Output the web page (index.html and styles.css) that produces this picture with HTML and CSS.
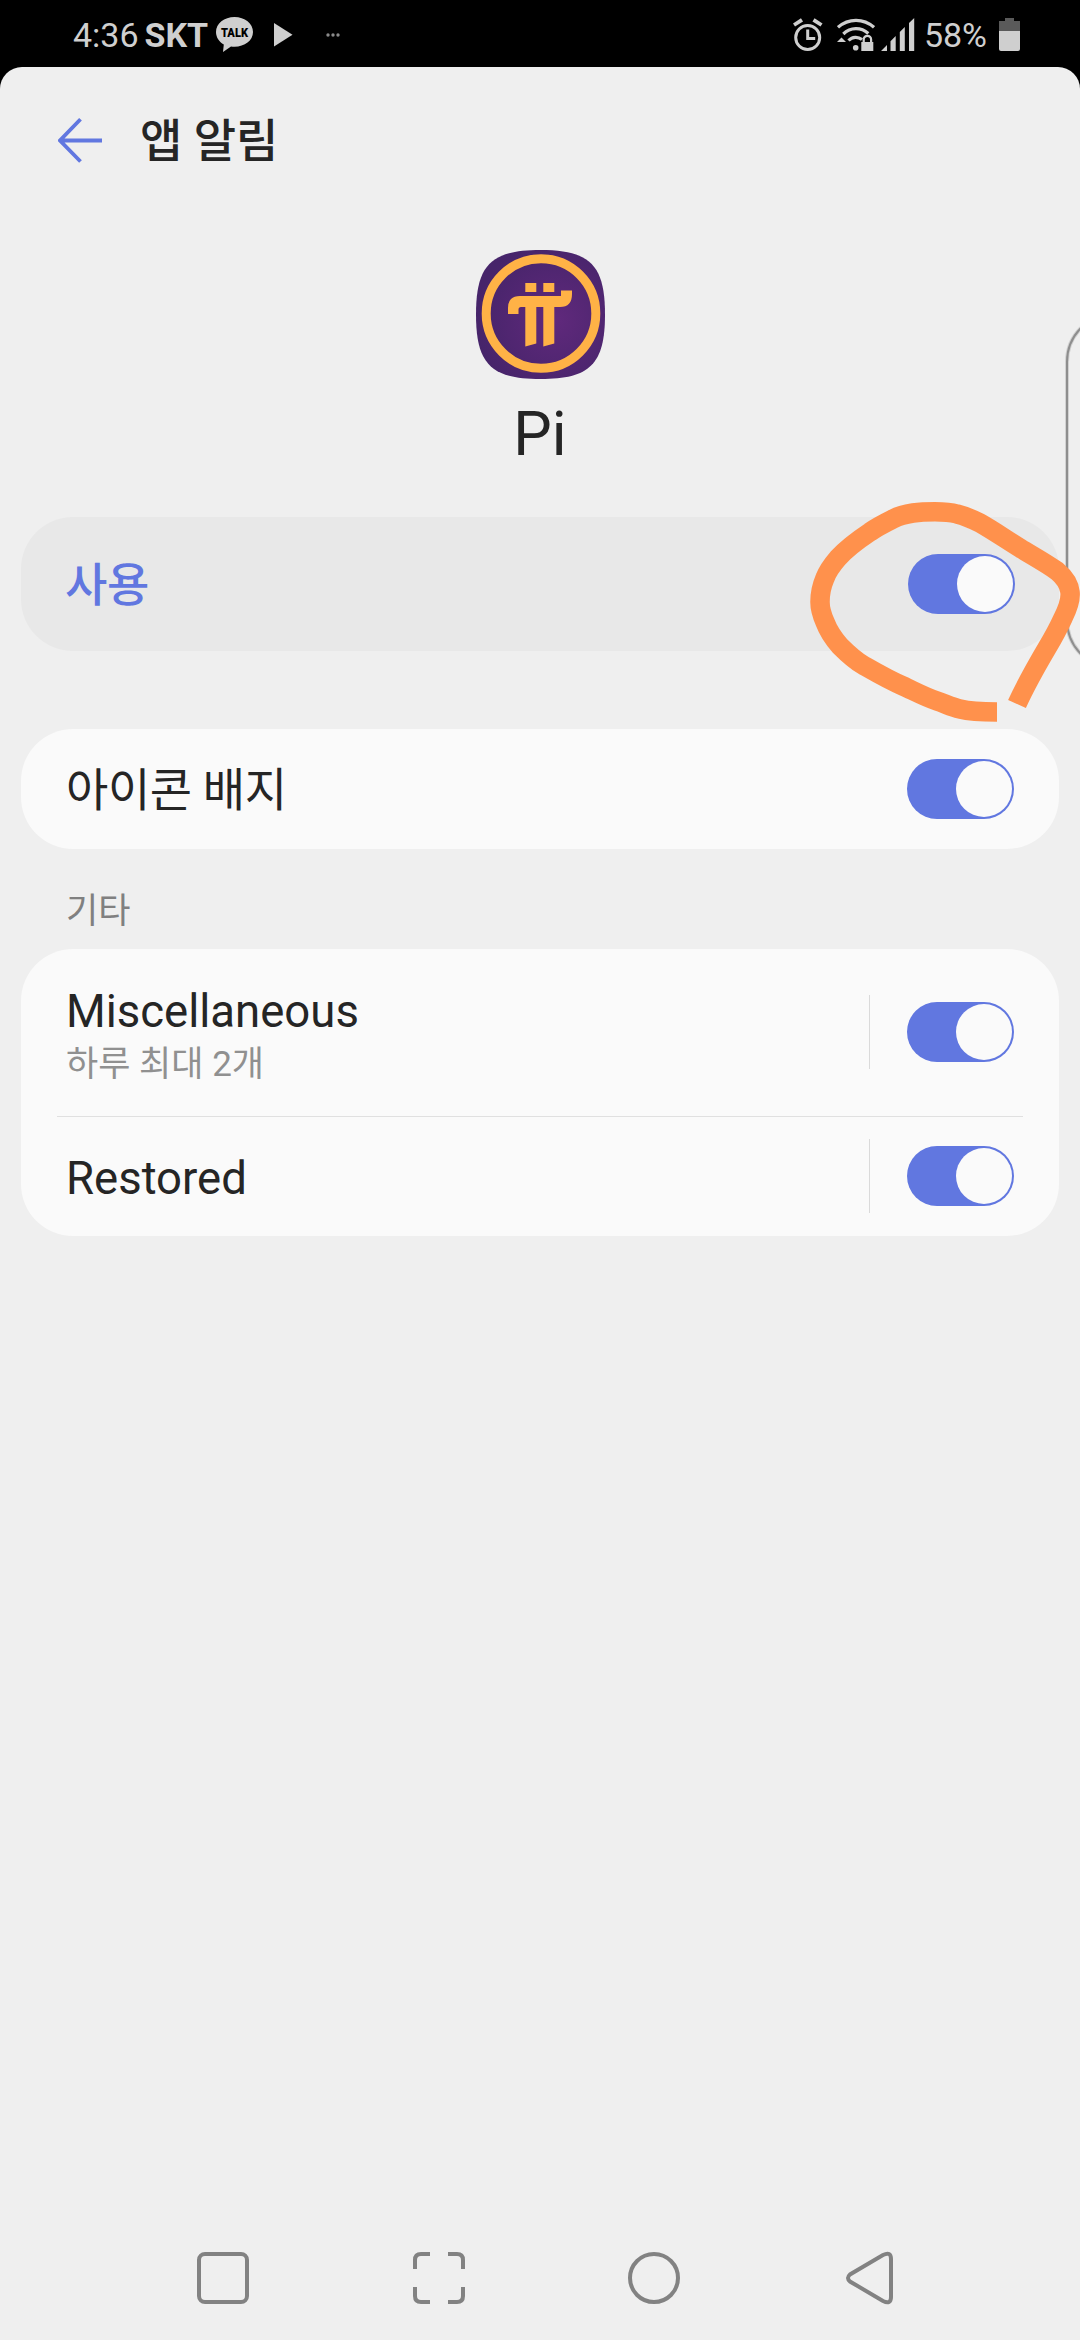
FILE: index.html
```
<!DOCTYPE html>
<html lang="ko">
<head>
    <meta charset="UTF-8">
    <meta name="viewport" content="width=device-width, initial-scale=1.0">
    <title>앱 알림</title>
    <link rel="stylesheet" href="styles.css">
</head>
<body>
    <!-- Status bar -->
    <div class="status-bar">
        <span class="time">4:36</span>
        <span class="carrier">SKT</span>
        <svg class="talk-icon" width="38" height="36" viewBox="0 0 38 36">
            <path d="M18.500 0C8.300 0 0 6.400 0 15c0 5.400 3.200 9.900 7.800 12.500L7 35l8-5.600c1.200.200 2.300.300 3.500.300C28.700 29.700 37 23.500 37 15S28.700 0 18.500 0z" fill="#cfcfcf"/>
            <text x="18.500" y="20" text-anchor="middle" class="talk-text" textLength="27" lengthAdjust="spacingAndGlyphs">TALK</text>
        </svg>
        <svg class="play-icon" width="19" height="24" viewBox="0 0 19 24">
            <path d="M0 0L18.500 11.700L0 23.500z" fill="#cfcfcf"/>
        </svg>
        <svg class="more-icon" width="14" height="4" viewBox="0 0 14 4">
            <g fill="#8a8a8a"><circle cx="2" cy="2" r="1.700"/><circle cx="7" cy="2" r="1.700"/><circle cx="12" cy="2" r="1.700"/></g>
        </svg>
        <div class="status-right">
            <svg class="alarm-icon" width="30" height="34" viewBox="0 0 30 34" fill="none" stroke="#cfcfcf">
                <circle cx="14.700" cy="19.500" r="12" stroke-width="3"/>
                <path d="M14.700 11.500v9h7.500" stroke-width="3"/>
                <path d="M1 7L9 1.800M20.500 1.800L28.500 7" stroke-width="3.800"/>
            </svg>
            <svg class="wifi-icon" width="38" height="34" viewBox="0 0 38 34" fill="none" stroke="#cfcfcf">
                <path d="M1 9.300C11.500 0 26.500 0 37 9.300" stroke-width="3.200"/>
                <path d="M6.300 16C13.500 9 24 9 31.300 15.500" stroke-width="3.200"/>
                <path d="M11.500 22.500C15.500 18.400 21 18.400 25 21.500" stroke-width="3.200"/>
                <circle cx="18.700" cy="29.700" r="2.800" fill="#cfcfcf" stroke="none"/>
                <path d="M0 24L4.500 19.500L9 24z" fill="#cfcfcf" stroke="none"/>
                <path d="M26.700 25v-3.500a3.700 3.700 0 0 1 7.400 0V25" stroke-width="2.200"/>
                <rect x="24.300" y="24" width="12" height="9" fill="#cfcfcf" stroke="none"/>
            </svg>
            <svg class="signal-icon" width="34" height="34" viewBox="0 0 34 34" fill="#cfcfcf">
                <path d="M0 33L6 27V33zM9.500 23.300L14.700 18V33H9.500zM18.800 14L23.800 9V33H18.800zM28 5L33.200 0V33H28z"/>
            </svg>
            <span class="percent">58%</span>
            <svg class="battery-icon" width="21" height="34" viewBox="0 0 21 34">
                <path d="M0 3h6V0h9v3h6v10H0z" fill="#5a5a5a"/>
                <path d="M0 13h21v18q0 2-2 2H2q-2 0-2-2z" fill="#cfcfcf"/>
            </svg>
        </div>
    </div>

    <div class="screen">
        <header class="app-header">
            <svg class="back-icon" width="44" height="46" viewBox="0 0 44 46" fill="none" stroke="#6177e0" stroke-width="3.800">
                <path d="M22.500 1.300L2 22.500L22.500 43.500M2 22.500H44"/>
            </svg>
            <h1>앱 알림</h1>
        </header>

        <div class="app-info">
            <svg width="129" height="129" viewBox="0 0 129 129">
                <defs>
                    <radialGradient id="piBg" cx="62%" cy="54%" r="62%">
                        <stop offset="0" stop-color="#60297c"/>
                        <stop offset="1" stop-color="#46246a"/>
                    </radialGradient>
                </defs>
                <path d="M64.500 0C114 0 129 15 129 64.500S114 129 64.500 129S0 114 0 64.500S15 0 64.500 0z" fill="url(#piBg)"/>
                <circle cx="65" cy="63.500" r="54.800" fill="none" stroke="#ffb246" stroke-width="9"/>
                <g fill="#ffb246">
                    <rect x="49.300" y="33" width="11" height="9"/>
                    <rect x="67.300" y="33" width="11" height="9"/>
                    <path d="M32 64V58Q32 46 44 46H85V40.500H96V44Q96 57 84 57H78.300V93.500L67.300 96.500V57H60.300V93.500L49.300 96.500V57H45Q42.500 57 42.500 59.500V64z"/>
                </g>
            </svg>
            <div class="app-name">Pi</div>
        </div>

        <div class="card card-main">
            <span class="label label-main">사용</span>
            <span class="toggle"></span>
        </div>

        <div class="card card-badge">
            <span class="label">아이콘 배지</span>
            <span class="toggle"></span>
        </div>

        <div class="section-title">기타</div>

        <div class="card-list">
            <div class="row row-tall">
                <div class="row-text">
                    <div class="label-en">Miscellaneous</div>
                    <div class="sub">하루 최대 2개</div>
                </div>
                <span class="separator"></span>
                <span class="toggle"></span>
            </div>
            <div class="line"></div>
            <div class="row">
                <div class="row-text">
                    <div class="label-en">Restored</div>
                </div>
                <span class="separator"></span>
                <span class="toggle"></span>
            </div>
        </div>
    </div>

    <!-- Navigation bar -->
    <nav class="nav-bar">
        <svg width="54" height="54" viewBox="0 0 54 54">
            <rect x="3" y="3" width="48" height="48" rx="6"/>
        </svg>
        <svg width="54" height="54" viewBox="0 0 54 54">
            <path d="M18 3H9Q3 3 3 9V18M36 3H45Q51 3 51 9V18M18 51H9Q3 51 3 45V36M36 51H45Q51 51 51 45V36"/>
        </svg>
        <svg width="54" height="54" viewBox="0 0 54 54">
            <circle cx="27" cy="27" r="24"/>
        </svg>
        <svg width="54" height="54" viewBox="0 0 54 54">
            <path d="M40 4Q48 0 48 8V46Q48 54 40 50L7 30.500Q3 27 7 23.500z"/>
        </svg>
    </nav>

    <!-- Edge panel handle -->
    <svg class="edge-panel" width="16" height="352" viewBox="0 0 16 352">
        <path class="edge-shadow" d="M17 12Q3 26 3 46V304Q3 324 17 338"/>
        <path class="edge-line" d="M17 12Q3 26 3 46V304Q3 324 17 338"/>
    </svg>

    <!-- Pen mark around the main switch -->
    <svg class="pen-mark" width="280" height="240" viewBox="800 490 280 240">
        <path d="M997 712C985 712 972 712 960 709C951 707 946 704 937 701C925 697 914 691 903 686C889 680 877 673 863 665C856 661 847 653 840 646C833 638 828 630 825 622C821 613 820 608 820 602C820 593 822 585 825 578C828 570 832 565 838 558C847 548 858 540 870 532C877 527 885 523 893 519C900 515 906 514 913 513C920 512 928 511.700 935 511.700C942 511.700 950 512 957 514C965 516 972 519 980 523C994 531 1007 540 1020 548C1033 556 1046 563 1057 571C1063 576 1069 583 1070 592C1071 600 1067 610 1063 618C1058 629 1053 638 1047 648C1037 665 1027 682 1017 704"/>
    </svg>
</body>
</html>
```
FILE: styles.css
```
* {
    box-sizing: border-box;
}
body {
    margin: 0;
    width: 1080px;
    height: 2340px;
    position: relative;
    overflow: hidden;
    display: flex;
    flex-direction: column;
    background-color: #000000;
    font-family: Roboto, "Noto Sans CJK KR", sans-serif;
    color: #252525;
}
svg {
    display: block;
    flex-shrink: 0;
}

/* Status bar */
.status-bar {
    height: 67px;
    padding: 2px 60px 0 73px;
    display: flex;
    align-items: center;
    font-size: 34px;
    line-height: 40px;
    color: #cfcfcf;
}
.time, .carrier, .percent {
    padding-top: 1px;
}
.carrier {
    margin-left: 6px;
    font-weight: bold;
}
.talk-icon {
    margin-left: 8px;
}
.talk-text {
    font-family: Roboto, sans-serif;
    font-size: 13px;
    font-weight: 900;
    fill: #000000;
}
.play-icon {
    margin-left: 20px;
}
.more-icon {
    margin-left: 33px;
}
.status-right {
    margin-left: auto;
    display: flex;
    align-items: center;
}
.wifi-icon {
    margin-left: 14px;
}
.signal-icon {
    margin-left: 6px;
}
.percent {
    margin-left: 9px;
}
.battery-icon {
    margin-left: 12px;
}

/* Settings screen */
.screen {
    flex: 1;
    padding: 0 21px;
    border-radius: 22px 22px 0 0;
    background-color: #efefef;
}
.app-header {
    height: 183px;
    padding: 51px 0 0 37px;
    display: flex;
    align-items: flex-start;
}
h1 {
    margin: -5px 0 0 38px;
    font-size: 46px;
    line-height: 56px;
    font-weight: 500;
}
.app-info {
    height: 267px;
    display: flex;
    flex-direction: column;
    align-items: center;
}
.app-name {
    margin-top: 19px;
    font-size: 61px;
    line-height: 72px;
}
.card {
    padding: 0 45px 0 45px;
    display: flex;
    align-items: center;
    justify-content: space-between;
    border-radius: 52px;
    background-color: #fafafa;
}
.card-main {
    height: 134px;
    padding: 0 44px;
    background-color: #e8e8e8;
}
.card-badge {
    height: 120px;
    margin-top: 78px;
}
.label {
    padding-top: 2px;
    font-size: 46px;
    line-height: 56px;
    letter-spacing: -0.4px;
}
.label-main {
    font-weight: 500;
    color: #6177e0;
}
.section-title {
    height: 100px;
    padding: 39px 45px 0;
    font-size: 35px;
    line-height: 48px;
    color: #808080;
}
.card-list {
    border-radius: 52px;
    background-color: #fafafa;
}
.row {
    height: 119px;
    padding: 0 45px 1px 45px;
    display: flex;
    align-items: center;
}
.row-tall {
    height: 167px;
}
.row-text {
    flex: 1;
    padding-top: 6px;
}
.label-en {
    font-size: 45.5px;
    line-height: 56px;
}
.sub {
    padding-top: 1px;
    font-size: 35px;
    line-height: 48px;
    color: #909090;
}
.row-tall .row-text {
    padding-top: 9px;
}
.line {
    height: 1px;
    margin: 0 36px;
    background-color: #e0e0e0;
}
.separator {
    width: 1px;
    height: 74px;
    margin-right: 37px;
    background-color: #dadada;
}

/* Switch */
.toggle {
    width: 107px;
    height: 60px;
    padding: 2px 2px 2px 49px;
    flex-shrink: 0;
    border-radius: 30px;
    background-color: #6177e0;
}
.toggle::after {
    content: "";
    display: block;
    width: 56px;
    height: 56px;
    border-radius: 50%;
    background-color: #fafafa;
}

/* Navigation bar */
.nav-bar {
    height: 124px;
    padding: 0 183px 0 196px;
    display: flex;
    align-items: center;
    justify-content: space-between;
    background-color: #efefef;
}
.nav-bar svg {
    fill: none;
    stroke: #828282;
    stroke-width: 4;
}

/* Things lying over the screen */
.edge-panel {
    position: absolute;
    right: 0;
    top: 316px;
    fill: none;
}
.edge-line {
    stroke: #8e8e8e;
    stroke-width: 2;
}
.edge-shadow {
    stroke: rgba(0, 0, 0, 0.12);
    stroke-width: 4;
}
.pen-mark {
    position: absolute;
    left: 800px;
    top: 490px;
    fill: none;
    stroke: #ff914c;
    stroke-width: 19.5;
}
```
